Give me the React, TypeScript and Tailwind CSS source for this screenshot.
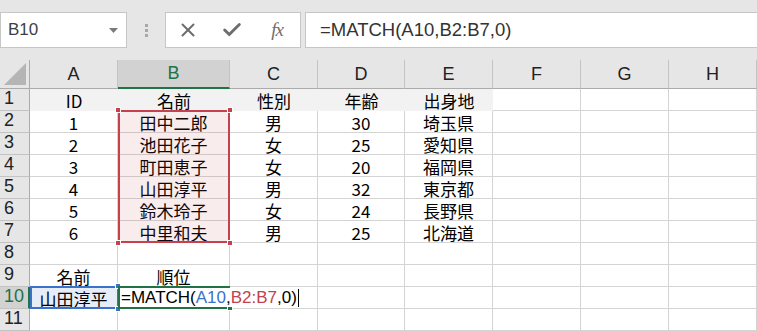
import { X, Check } from 'lucide-react';

const COLS = ['A', 'B', 'C', 'D', 'E', 'F', 'G', 'H'];

const data: string[][] = [
  ['ID', '名前', '性別', '年齢', '出身地'],
  ['1', '田中二郎', '男', '30', '埼玉県'],
  ['2', '池田花子', '女', '25', '愛知県'],
  ['3', '町田恵子', '女', '20', '福岡県'],
  ['4', '山田淳平', '男', '32', '東京都'],
  ['5', '鈴木玲子', '女', '24', '長野県'],
  ['6', '中里和夫', '男', '25', '北海道'],
  [],
  ['名前', '順位'],
  ['山田淳平'],
  [],
];

const cellFont = { fontFamily: '"Noto Sans CJK JP", "Liberation Sans", sans-serif' };

function Handle({ className }: { className: string }) {
  return <div className={`absolute w-[6px] h-[6px] border border-white ${className}`} />;
}

export default function App() {
  return (
    <div className="w-[757px] h-[331px] overflow-hidden bg-white font-['Liberation_Sans',sans-serif] text-[#222]">
      {/* Formula bar */}
      <div className="h-[60px] bg-[#e6e6e6] flex items-start pt-[12px]">
        <div className="w-[127px] h-[36px] bg-white border border-[#c6c6c6] flex items-center justify-between pl-[7px] pr-[8px]">
          <span className="text-[17px] text-[#3a3f4a]">B10</span>
          <svg width="9" height="5" viewBox="0 0 9 5">
            <path d="M0 0 L9 0 L4.5 5 Z" fill="#7a7a7a" />
          </svg>
        </div>
        <div className="w-[38px] h-[36px] flex flex-col items-center justify-center gap-[2px]">
          <div className="w-[3px] h-[3px] bg-[#a8a8a8]" />
          <div className="w-[3px] h-[3px] bg-[#a8a8a8]" />
          <div className="w-[3px] h-[3px] bg-[#a8a8a8]" />
        </div>
        <div className="w-[136px] h-[36px] bg-white border border-[#c6c6c6] flex items-center">
          <div className="w-[44px] flex justify-center">
            <X size={22} strokeWidth={2.2} color="#6e6e6e" />
          </div>
          <div className="w-[44px] flex justify-center">
            <Check size={22} strokeWidth={3.2} color="#6e6e6e" />
          </div>
          <div className="w-[46px] flex justify-center">
            <span className="font-['Liberation_Serif',serif] italic text-[19px] text-[#6e6e6e] tracking-[-1px]">fx</span>
          </div>
        </div>
        <div className="ml-[4px] flex-1 h-[36px] bg-white border border-[#c6c6c6] border-r-0 flex items-center pl-[14px]">
          <span className="text-[18.5px] text-[#333]">=MATCH(A10,B2:B7,0)</span>
        </div>
      </div>

      {/* Sheet */}
      <div className="relative">
        <div className="grid grid-cols-[30px_88px_112px_88px_87px_88px_88px_88px_88px] grid-rows-[29px_repeat(11,22px)]">
          {/* corner */}
          <div className="bg-[#e6e6e6] border-r border-b border-[#ababab] relative">
            <svg className="absolute right-[3px] bottom-[3px]" width="22" height="22" viewBox="0 0 22 22">
              <path d="M22 0 L22 22 L0 22 Z" fill="#b5b5b5" />
            </svg>
          </div>
          {COLS.map((c) => (
            <div
              key={c}
              className={
                c === 'B'
                  ? 'bg-[#d2d2d2] border-b-2 border-b-[#217346] border-r border-r-[#c3c3c3] flex items-center justify-center text-[18px] text-[#217346]'
                  : 'bg-[#e6e6e6] border-b border-b-[#ababab] border-r border-r-[#c3c3c3] flex items-center justify-center text-[18px] text-[#222]'
              }
            >
              {c}
            </div>
          ))}
          {data.map((row, r) => (
            <>
              <div
                key={`h${r}`}
                className={
                  r === 9
                    ? 'bg-[#d2d2d2] border-r-2 border-r-[#217346] border-b border-b-[#c3c3c3] pl-[4px] text-[18px] leading-[19px] text-[#217346]'
                    : 'bg-[#e6e6e6] border-r border-r-[#ababab] border-b border-b-[#c3c3c3] pl-[4px] text-[18px] leading-[19px] text-[#222]'
                }
              >
                {r + 1}
              </div>
              {COLS.map((c, ci) => {
                const v = row[ci] ?? '';
                const filled = r === 0 && ci < 5;
                const isB10 = r === 9 && ci === 1;
                return (
                  <div
                    key={`${r}-${c}`}
                    style={cellFont}
                    className={
                      filled
                        ? 'bg-[#f2f2f2] flex items-end justify-center pb-[1px] text-[17px] leading-[19px] text-black'
                        : r === 9 && ci === 0
                          ? 'bg-[#e6edf8] border-r border-b border-[#d4d4d4] flex items-end justify-center text-[17px] leading-[19px] text-black'
                          : isB10
                            ? 'border-b border-[#d4d4d4] flex items-end text-[17px] leading-[19px] text-black'
                            : 'border-r border-b border-[#d4d4d4] flex items-end justify-center text-[17px] leading-[19px] text-black'
                    }
                  >
                    {isB10 ? null : v}
                  </div>
                );
              })}
            </>
          ))}
        </div>

        {/* Reference range B2:B7 */}
        <div className="absolute left-[118px] top-[50px] w-[112px] h-[133px] border-2 border-[#c4414d] bg-[#c4414d]/10" />
        <Handle className="left-[115px] top-[47px] bg-[#c4414d]" />
        <Handle className="left-[227px] top-[47px] bg-[#c4414d]" />
        <Handle className="left-[115px] top-[180px] bg-[#c4414d]" />
        <Handle className="left-[227px] top-[180px] bg-[#c4414d]" />

        {/* Reference A10 */}
        <div className="absolute left-[30px] top-[226px] w-[89px] h-[23px] border-2 border-[#3a72c9]" />
        <Handle className="left-[115px] top-[223px] bg-[#3a72c9]" />
        <Handle className="left-[115px] top-[246px] bg-[#3a72c9]" />

        {/* Editing B10 */}
        <div className="absolute left-[118px] top-[226px] w-[112px] h-[23px] border-2 border-r-0 border-[#217346]" />
        <div className="absolute left-[227px] top-[245px] w-[6px] h-[6px] bg-[#217346] border border-white" />
        <div className="absolute left-[121px] top-[228px] h-[19px] flex items-end text-[17px] leading-[19px] text-black whitespace-nowrap bg-white pr-[1px]">
          <span>=MATCH(</span>
          <span className="text-[#3a72c9]">A10</span>
          <span>,</span>
          <span className="text-[#c4414d]">B2:B7</span>
          <span>,0)</span>
          <span className="inline-block w-[1px] h-[18px] bg-black ml-[1px]" />
        </div>
      </div>
    </div>
  );
}
